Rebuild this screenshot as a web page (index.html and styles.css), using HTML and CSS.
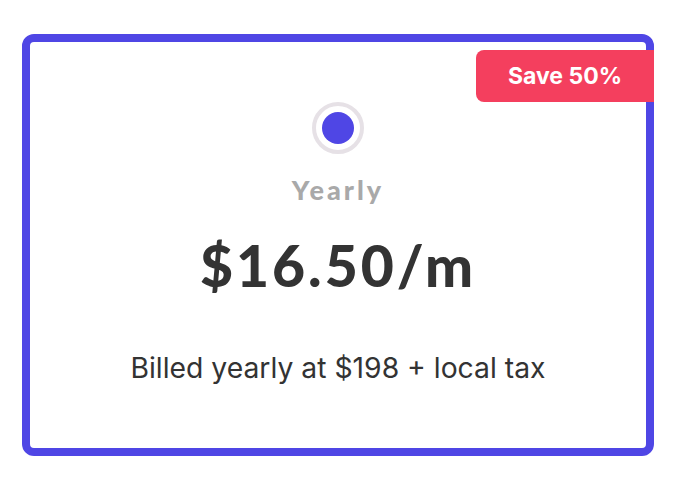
FILE: index.html
```html
<!DOCTYPE html>
<html lang="en">
<head>
    <meta charset="UTF-8" />
    <meta name="viewport" content="width=device-width, initial-scale=1.0" />
    <title>Yearly plan</title>
    <link rel="stylesheet" href="styles.css">
</head>
<body>
    <div class="plan-card">
        <span class="badge">Save 50%</span>

        <div class="radio">
            <div class="radio-dot"></div>
        </div>

        <h2 class="plan-name">Yearly</h2>
        <p class="plan-price">$16.50/m</p>
        <p class="plan-note">Billed yearly at $198 + local tax</p>
    </div>
</body>
</html>
```

FILE: styles.css
```css
body {
    margin: 0;
    padding: 34px 0 0 22px;
    background: #fff;
    font-family: Inter, 'Liberation Sans', sans-serif;
    color: #333;
}

.plan-card {
    position: relative;
    box-sizing: border-box;
    width: 632px;
    height: 422px;
    border: 8px solid #4f46e5;
    border-radius: 12px;
    background: #fff;
    display: flex;
    flex-direction: column;
    align-items: center;
    padding-top: 60px;
}

.badge {
    position: absolute;
    top: 8px;
    right: -8px;
    width: 178px;
    height: 52px;
    display: flex;
    align-items: center;
    justify-content: center;
    background: #f43f5e;
    color: #fff;
    font-weight: 700;
    font-size: 23px;
    border-radius: 8px 0 0 8px;
}

.radio {
    box-sizing: border-box;
    width: 52px;
    height: 52px;
    border: 4px solid #e6e1e6;
    border-radius: 50%;
    display: flex;
    align-items: center;
    justify-content: center;
}

.radio-dot {
    width: 32px;
    height: 32px;
    border-radius: 50%;
    background: #4f46e5;
}

.plan-name {
    margin: 20px 0 0;
    font-family: Lato, 'Open Sans', sans-serif;
    font-size: 27px;
    line-height: 32px;
    font-weight: 900;
    letter-spacing: 3px;
    color: #a9a9a9;
}

.plan-price {
    margin: 27px 0 0;
    font-family: Lato, 'Open Sans', sans-serif;
    font-size: 57px;
    line-height: 64px;
    font-weight: 900;
    letter-spacing: 3px;
    color: #333;
}

.plan-note {
    margin: 55px 0 0;
    font-size: 28.3px;
    line-height: 32px;
    color: #333;
}
```
